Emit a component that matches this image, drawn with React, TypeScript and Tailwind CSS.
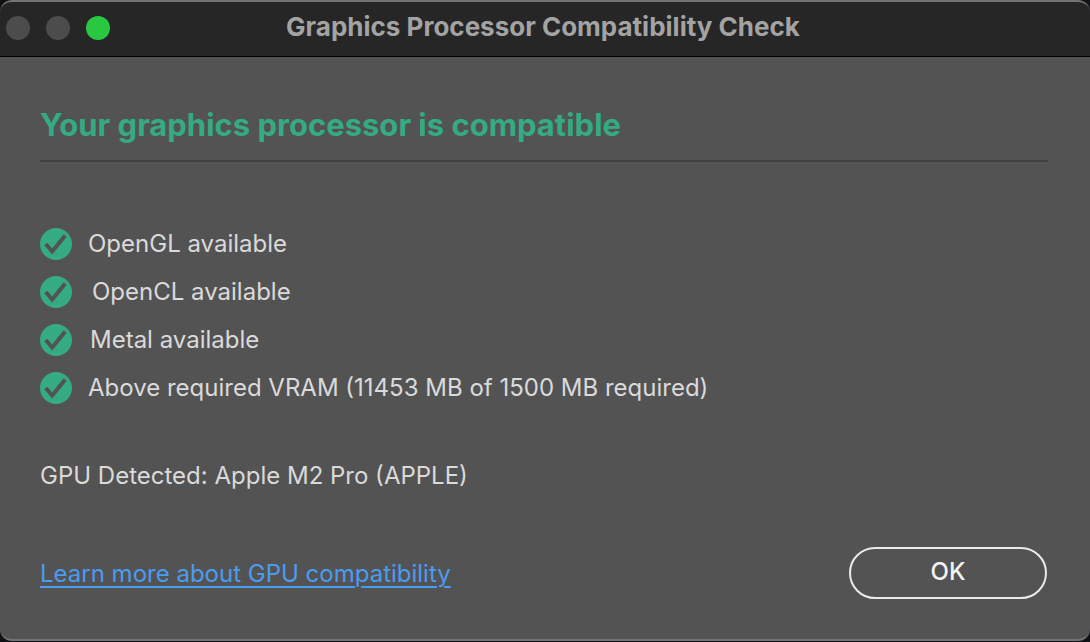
const checks = [
  { label: "OpenGL available", indent: "pl-4" },
  { label: "OpenCL available", indent: "pl-5" },
  { label: "Metal available", indent: "pl-4.5" },
  { label: "Above required VRAM (11453 MB of 1500 MB required)", indent: "pl-4" },
];

const CheckIcon = () => (
  <svg viewBox="0 0 32 32" className="size-8 shrink-0" aria-hidden="true">
    <circle cx="16" cy="16" r="16" fill="#34ab82" />
    <path d="M5.8 16 12.2 23.4 25.2 7.4" fill="none" stroke="#535353" strokeWidth="4" />
  </svg>
);

const TitleBar = () => (
  <header className="grid grid-cols-[1fr_auto_1fr] items-center h-[55px] pl-1.5 pr-2.5 bg-[#262626] border-b border-black">
    <div className="flex gap-4 pb-0.5">
      <button type="button" aria-label="Close" className="size-6 rounded-full bg-[#4c4c4c]" />
      <button type="button" aria-label="Minimize" className="size-6 rounded-full bg-[#4c4c4c]" />
      <button type="button" aria-label="Zoom" className="size-6 rounded-full bg-[#28c840]" />
    </div>
    <h1 className="pb-1 text-[26px] leading-8 font-bold text-[#a3a3a3]">
      Graphics Processor Compatibility Check
    </h1>
  </header>
);

export default function App() {
  return (
    <div className="min-h-screen pb-0.5 bg-[#101214] font-['Inter','Liberation_Sans',sans-serif]">
      <div className="overflow-hidden rounded-xl border-y-2 border-[#737373] bg-[#535353]">
        <TitleBar />
        <main className="pl-10 pr-[42px] pt-12 pb-10 text-[24px] leading-8 text-[#dadada]">
          <h2 className="pb-[15px] border-b-2 border-[#404040] text-[31px] leading-10 font-bold text-[#34ab82]">
            Your graphics processor is compatible
          </h2>

          <ul className="mt-[66px] flex flex-col gap-4">
            {checks.map(({ label, indent }) => (
              <li key={label} className="flex items-center">
                <CheckIcon />
                <span className={indent}>{label}</span>
              </li>
            ))}
          </ul>

          <p className="mt-14">GPU Detected: Apple M2 Pro (APPLE)</p>

          <div className="mt-[55px] flex items-center justify-between">
            <a href="#gpu-compatibility" className="pt-0.5 text-[#4b9cf0] underline decoration-2 underline-offset-4">
              Learn more about GPU compatibility
            </a>
            <button
              type="button"
              className="w-[198px] h-[52px] mr-px pb-0.5 rounded-full border-2 border-[#ebebeb] font-medium text-[#f2f2f2]"
            >
              OK
            </button>
          </div>
        </main>
      </div>
    </div>
  );
}
